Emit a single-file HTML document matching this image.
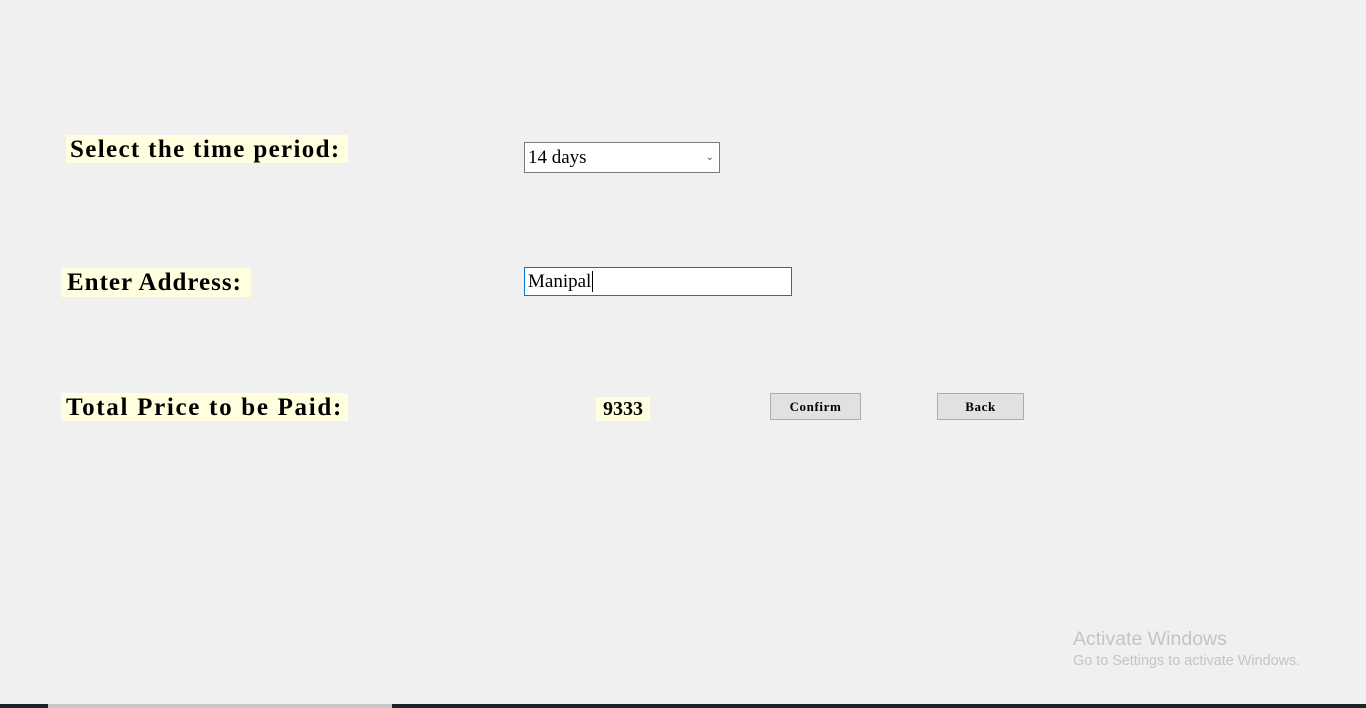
<!DOCTYPE html>
<html><head><style>
body{margin:0;width:1366px;height:708px;background:#f0f0f0;position:relative;overflow:hidden;font-family:"Liberation Serif",serif}
.l{position:absolute;background:#ffffe0;font-weight:bold;font-size:25px;white-space:nowrap;line-height:29px;color:#000}
.b{position:absolute;background:#e1e1e1;border:1px solid #adadad;font-weight:bold;font-size:13px;letter-spacing:0.6px;text-align:center;box-sizing:border-box;line-height:25px}
.wm{position:absolute;color:#c4c4c4;font-family:"Liberation Sans",sans-serif}
</style></head><body>
<div class="l" style="left:66px;top:135px;width:282px;height:28px;padding-left:4px;box-sizing:border-box;letter-spacing:1.35px">Select the time period:</div>
<div style="position:absolute;left:524px;top:142px;width:196px;height:31px;box-sizing:border-box;border:1px solid #7a7a7a;background:#fff;font-size:19px;line-height:29px;padding-left:3px">14 days<span style="position:absolute;right:5px;top:0;font-size:10px;color:#555">&#8964;</span></div>
<div class="l" style="left:61px;top:268px;width:190px;height:29px;padding-left:6px;box-sizing:border-box;letter-spacing:1px">Enter Address:</div>
<div style="position:absolute;left:524px;top:267px;width:268px;height:29px;box-sizing:border-box;border:1px solid #0078d7;background:#fff;font-size:19px;line-height:27px;padding-left:3px">Manipal<span style="border-left:1px solid #000;margin-left:1px"></span></div>
<div class="l" style="left:61px;top:393px;width:287px;height:28px;padding-left:5px;box-sizing:border-box;letter-spacing:1.7px">Total Price to be Paid:</div>
<div class="l" style="left:596px;top:397px;width:54px;height:24px;font-size:20px;line-height:24px;text-align:center">9333</div>
<div class="b" style="left:770px;top:393px;width:91px;height:27px">Confirm</div>
<div class="b" style="left:937px;top:393px;width:87px;height:27px">Back</div>
<div class="wm" style="left:1073px;top:628px;font-size:19.5px">Activate Windows</div>
<div class="wm" style="left:1073px;top:653px;font-size:14.4px">Go to Settings to activate Windows.</div>
<div style="position:absolute;left:0;top:704px;width:1366px;height:4px;background:#1f2328"></div>
<div style="position:absolute;left:48px;top:704px;width:344px;height:4px;background:#c8c8c8"></div>
</body></html>
